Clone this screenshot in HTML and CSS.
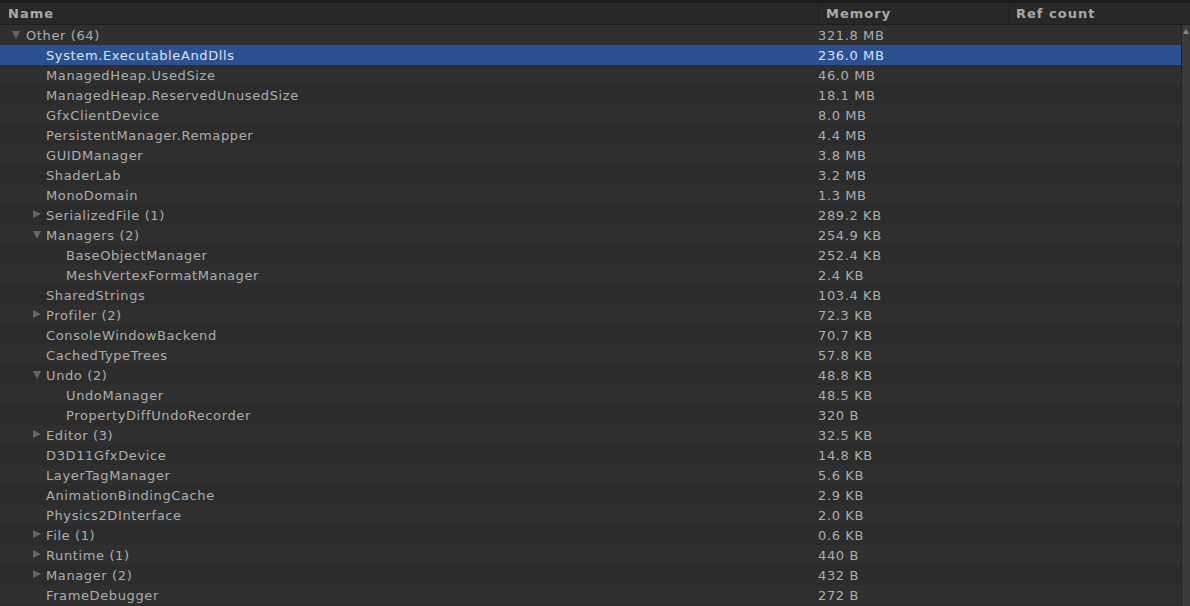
FILE: index.html
```html
<!DOCTYPE html>
<html>
<head>
<meta charset="utf-8">
<link rel="stylesheet" href="styles.css">
</head>
<body>
<div class="panel">
  <div class="topband"></div>
  <div class="header">
    <div class="hcell hname">Name</div>
    <div class="hcell hmem">Memory</div>
    <div class="hcell href">Ref count</div>
  </div>
  <div class="body">
    <div class="rows">
      <div class="row"><div class="name l0"><span class="tri down"></span>Other (64)</div><div class="mem">321.8 MB</div><div class="ref"></div></div>
      <div class="row sel"><div class="name l1"><span class="tri none"></span>System.ExecutableAndDlls</div><div class="mem">236.0 MB</div><div class="ref"></div></div>
      <div class="row"><div class="name l1"><span class="tri none"></span>ManagedHeap.UsedSize</div><div class="mem">46.0 MB</div><div class="ref"></div></div>
      <div class="row"><div class="name l1"><span class="tri none"></span>ManagedHeap.ReservedUnusedSize</div><div class="mem">18.1 MB</div><div class="ref"></div></div>
      <div class="row"><div class="name l1"><span class="tri none"></span>GfxClientDevice</div><div class="mem">8.0 MB</div><div class="ref"></div></div>
      <div class="row"><div class="name l1"><span class="tri none"></span>PersistentManager.Remapper</div><div class="mem">4.4 MB</div><div class="ref"></div></div>
      <div class="row"><div class="name l1"><span class="tri none"></span>GUIDManager</div><div class="mem">3.8 MB</div><div class="ref"></div></div>
      <div class="row"><div class="name l1"><span class="tri none"></span>ShaderLab</div><div class="mem">3.2 MB</div><div class="ref"></div></div>
      <div class="row"><div class="name l1"><span class="tri none"></span>MonoDomain</div><div class="mem">1.3 MB</div><div class="ref"></div></div>
      <div class="row"><div class="name l1"><span class="tri right"></span>SerializedFile (1)</div><div class="mem">289.2 KB</div><div class="ref"></div></div>
      <div class="row"><div class="name l1"><span class="tri down"></span>Managers (2)</div><div class="mem">254.9 KB</div><div class="ref"></div></div>
      <div class="row"><div class="name l2"><span class="tri none"></span>BaseObjectManager</div><div class="mem">252.4 KB</div><div class="ref"></div></div>
      <div class="row"><div class="name l2"><span class="tri none"></span>MeshVertexFormatManager</div><div class="mem">2.4 KB</div><div class="ref"></div></div>
      <div class="row"><div class="name l1"><span class="tri none"></span>SharedStrings</div><div class="mem">103.4 KB</div><div class="ref"></div></div>
      <div class="row"><div class="name l1"><span class="tri right"></span>Profiler (2)</div><div class="mem">72.3 KB</div><div class="ref"></div></div>
      <div class="row"><div class="name l1"><span class="tri none"></span>ConsoleWindowBackend</div><div class="mem">70.7 KB</div><div class="ref"></div></div>
      <div class="row"><div class="name l1"><span class="tri none"></span>CachedTypeTrees</div><div class="mem">57.8 KB</div><div class="ref"></div></div>
      <div class="row"><div class="name l1"><span class="tri down"></span>Undo (2)</div><div class="mem">48.8 KB</div><div class="ref"></div></div>
      <div class="row"><div class="name l2"><span class="tri none"></span>UndoManager</div><div class="mem">48.5 KB</div><div class="ref"></div></div>
      <div class="row"><div class="name l2"><span class="tri none"></span>PropertyDiffUndoRecorder</div><div class="mem">320 B</div><div class="ref"></div></div>
      <div class="row"><div class="name l1"><span class="tri right"></span>Editor (3)</div><div class="mem">32.5 KB</div><div class="ref"></div></div>
      <div class="row"><div class="name l1"><span class="tri none"></span>D3D11GfxDevice</div><div class="mem">14.8 KB</div><div class="ref"></div></div>
      <div class="row"><div class="name l1"><span class="tri none"></span>LayerTagManager</div><div class="mem">5.6 KB</div><div class="ref"></div></div>
      <div class="row"><div class="name l1"><span class="tri none"></span>AnimationBindingCache</div><div class="mem">2.9 KB</div><div class="ref"></div></div>
      <div class="row"><div class="name l1"><span class="tri none"></span>Physics2DInterface</div><div class="mem">2.0 KB</div><div class="ref"></div></div>
      <div class="row"><div class="name l1"><span class="tri right"></span>File (1)</div><div class="mem">0.6 KB</div><div class="ref"></div></div>
      <div class="row"><div class="name l1"><span class="tri right"></span>Runtime (1)</div><div class="mem">440 B</div><div class="ref"></div></div>
      <div class="row"><div class="name l1"><span class="tri right"></span>Manager (2)</div><div class="mem">432 B</div><div class="ref"></div></div>
      <div class="row"><div class="name l1"><span class="tri none"></span>FrameDebugger</div><div class="mem">272 B</div><div class="ref"></div></div>
    </div>
    <div class="scrollbar"><span class="uparrow"></span></div>
  </div>
</div>
</body>
</html>
```
FILE: styles.css
```css
html, body {
  margin: 0;
  padding: 0;
  background: #2c2c2c;
  overflow: hidden;
}
.panel {
  width: 1190px;
  height: 606px;
  display: flex;
  flex-direction: column;
  font-family: "DejaVu Sans", Verdana, sans-serif;
  font-size: 13px;
  letter-spacing: 0.62px;
  color: #adadad;
  background: #2d2d2d;
  overflow: hidden;
}
.topband {
  height: 3px;
  background: #1b1b1b;
  flex: none;
}
.header {
  flex: none;
  height: 21px;
  display: grid;
  grid-template-columns: 818px 190px 1fr;
  background: #282828;
  border-bottom: 1px solid #1e1e1e;
  font-weight: bold;
  letter-spacing: 1px;
  color: #a8a8a8;
}
.hcell {
  display: flex;
  align-items: center;
  padding-left: 7px;
  border-left: 1px solid #222;
}
.hname {
  border-left: none;
  padding-left: 8px;
}
.body {
  flex: 1;
  display: flex;
  min-height: 0;
}
.rows {
  flex: 1;
  display: flex;
  flex-direction: column;
}
.row {
  height: 20px;
  flex: none;
  display: grid;
  grid-template-columns: 818px 190px 1fr;
  align-items: center;
}
.row:nth-child(odd) {
  background: #2f2f2f;
}
.row:nth-child(even) {
  background: #2c2c2c;
}
.row.sel {
  background: #2c5191;
  color: #d8e3f6;
}
.name {
  display: flex;
  align-items: center;
  white-space: nowrap;
}
.name.l0 { padding-left: 12px; }
.name.l1 { padding-left: 33px; }
.name.l2 { padding-left: 53px; }
.tri {
  width: 14px;
  height: 10px;
  flex: none;
  position: relative;
}
.l1 .tri, .l2 .tri { width: 13px; }
.tri.down::before {
  content: "";
  position: absolute;
  left: 0;
  top: 1px;
  border-left: 4.5px solid transparent;
  border-right: 4.5px solid transparent;
  border-top: 8px solid #666;
}
.tri.right::before {
  content: "";
  position: absolute;
  left: 0;
  top: 0;
  border-top: 4.5px solid transparent;
  border-bottom: 4.5px solid transparent;
  border-left: 8px solid #666;
}
.mem {
  white-space: nowrap;
}
.scrollbar {
  width: 8px;
  flex: none;
  background: #3a3a3a;
  border-left: 1px solid #222;
  position: relative;
}
.uparrow {
  position: absolute;
  left: 1px;
  top: 4px;
  border-left: 3px solid transparent;
  border-right: 3px solid transparent;
  border-bottom: 5px solid #8a8a8a;
}
```
